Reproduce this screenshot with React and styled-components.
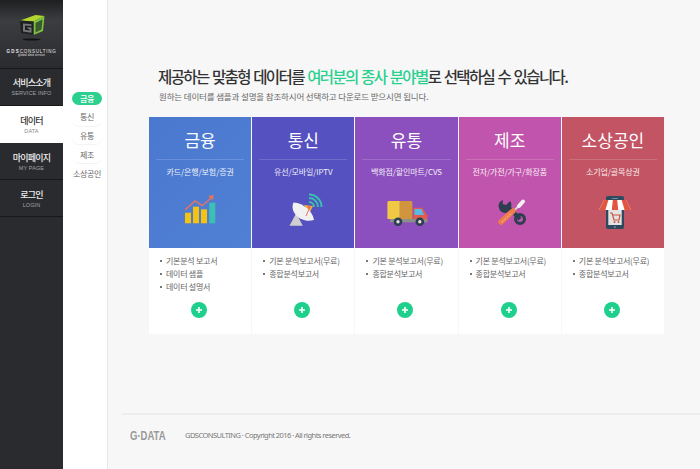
import React from "react";
import styled, { createGlobalStyle } from "styled-components";

const Global = createGlobalStyle`
  html, body { margin: 0; padding: 0; height: 100%; overflow: hidden; }
  body { font-family: "Noto Sans CJK KR", "Noto Sans", sans-serif; background: #f7f7f7; }
  * { box-sizing: border-box; }
  ul { list-style: none; margin: 0; padding: 0; }
`;

const Page = styled.div`
  display: flex;
  width: 700px;
  height: 469px;
`;

const Sidebar = styled.nav`
  width: 63px;
  flex: none;
  background: #2a2b2f;
`;

const LogoBox = styled.div`
  height: 69px;
  display: flex;
  flex-direction: column;
  align-items: center;
  padding-top: 14px;
  background: linear-gradient(#1e1f21, #3c3d40 30%, #2a2b2e 100%);
  border-bottom: 1px solid #17181a;
`;

const LogoText = styled.div`
  margin-top: 8px;
  font-family: "Liberation Sans", sans-serif;
  font-size: 4.5px;
  line-height: 5px;
  letter-spacing: 0.75px;
  color: #e8e8e8;
  white-space: nowrap;
  b { font-weight: 700; letter-spacing: 1.2px; }
`;

const LogoSub = styled.div`
  font-family: "Liberation Sans", sans-serif;
  font-size: 3px;
  line-height: 3px;
  color: #bbb;
  font-weight: 700;
  white-space: nowrap;
`;

const MenuItem = styled.a`
  display: flex;
  flex-direction: column;
  align-items: center;
  height: 37px;
  padding-top: 7px;
  background: ${(p) => (p.$active ? "#fff" : "#2a2b2f")};
  border-bottom: 1px solid ${(p) => (p.$active ? "#fff" : "#17181a")};
  color: ${(p) => (p.$active ? "#333" : "#eee")};
  &:first-of-type { padding-top: 6px; }
`;

const MenuTitle = styled.span`
  font-size: 9px;
  line-height: 15px;
  font-weight: 500;
  letter-spacing: -0.8px;
  white-space: nowrap;
`;

const MenuSub = styled.span`
  font-family: "Liberation Sans", sans-serif;
  font-size: 5.5px;
  line-height: 7px;
  letter-spacing: 0.1px;
  color: ${(p) => (p.$active ? "#888" : "#a0a1a4")};
  white-space: nowrap;
`;

const SubNav = styled.ul`
  width: 45px;
  flex: none;
  background: #fff;
  border-right: 1px solid #e6e6e6;
  padding: 92px 5px 0 9px;
`;

const SubItem = styled.li`
  height: ${(p) => (p.$active ? "13px" : "18.7px")};
  margin-bottom: ${(p) => (p.$active ? "3px" : "0")};
  display: flex;
  align-items: center;
  justify-content: center;
  font-size: 8px;
  letter-spacing: -0.3px;
  white-space: nowrap;
  border-radius: 7px;
  background: ${(p) => (p.$active ? "#2bd08f" : "transparent")};
  color: ${(p) => (p.$active ? "#fff" : "#666")};
  font-weight: ${(p) => (p.$active ? 500 : 400)};
  border-bottom: ${(p) => (p.$active || p.$last ? "0" : "1px solid #f3f3f3")};
`;

const Main = styled.main`
  flex: 1;
  display: flex;
  flex-direction: column;
  min-width: 0;
`;

const Content = styled.section`
  flex: 1;
  padding: 65px 36px 0 41px;
`;

const Title = styled.h1`
  margin: 0 0 0 9px;
  font-size: 15.5px;
  line-height: 22px;
  font-weight: 500;
  letter-spacing: -1.62px;
  word-spacing: 1.5px;
  color: #333;
  white-space: nowrap;
  em { font-style: normal; color: #2bd08f; }
`;

const Lead = styled.p`
  margin: 3px 0 0 10px;
  font-size: 8.5px;
  line-height: 13px;
  letter-spacing: -0.15px;
  color: #666;
  white-space: nowrap;
`;

const Cards = styled.div`
  display: grid;
  grid-template-columns: repeat(5, 1fr);
  gap: 1px;
  width: 515px;
  margin-top: 14px;
`;

const Card = styled.article`
  height: 217px;
  background: #fff;
  display: flex;
  flex-direction: column;
`;

const CardTop = styled.div`
  height: 131px;
  background: ${(p) => p.$bg};
  color: #fff;
  padding: 0 7px;
  display: flex;
  flex-direction: column;
  align-items: center;
`;

const CardName = styled.h2`
  margin: 0;
  width: 100%;
  height: 43px;
  padding-top: 11px;
  text-align: center;
  font-size: 17px;
  line-height: 24px;
  font-weight: 400;
  border-bottom: 1px solid rgba(255, 255, 255, 0.16);
  white-space: nowrap;
`;

const CardTags = styled.p`
  margin: 5px 0 0;
  font-size: 8px;
  line-height: 14px;
  letter-spacing: -0.1px;
  opacity: 0.9;
  white-space: nowrap;
`;

const IconBox = styled.div`
  width: 44px;
  height: 38px;
  margin-top: 13px;
`;

const CardBody = styled.div`
  flex: 1;
  padding: 6px 0 0 11px;
  display: flex;
  flex-direction: column;
`;

const Bullet = styled.li`
  position: relative;
  padding-left: 6px;
  font-size: 8px;
  line-height: 13px;
  letter-spacing: -0.25px;
  color: #666;
  white-space: nowrap;
  &::before {
    content: "";
    position: absolute;
    left: 0;
    top: 6px;
    width: 2px;
    height: 2px;
    background: #777;
  }
`;

const PlusRow = styled.div`
  margin: auto 0 16px -13px;
  display: flex;
  justify-content: center;
`;

const Plus = styled.button`
  width: 16px;
  height: 16px;
  padding: 0;
  border: 0;
  border-radius: 50%;
  background: #1fd08c;
  display: flex;
  align-items: center;
  justify-content: center;
`;

const Footer = styled.footer`
  margin-left: 14px;
  height: 56px;
  flex: none;
  border-top: 2px solid #ececec;
  display: flex;
  align-items: center;
  padding: 0 0 14px 8px;
`;

const FooterLogo = styled.span`
  width: 55px;
  font-family: "Liberation Sans", sans-serif;
  font-size: 13px;
  font-weight: 700;
  color: #999;
  white-space: nowrap;
  transform: scaleX(0.73);
  transform-origin: left center;
`;

const Copy = styled.span`
  font-family: "Noto Sans", sans-serif;
  font-size: 7.5px;
  letter-spacing: -0.54px;
  color: #777;
  white-space: nowrap;
`;

const CubeLogo = () => (
  <svg width="26" height="27" viewBox="0 0 26 27">
    <ellipse cx="12.5" cy="25.5" rx="9" ry="0.9" fill="#111" />
    <path d="M1 6.5 L16.5 1 L25.5 2 L14.5 7.5 Z" fill="#b5d62f" />
    <path d="M14.5 7.5 L25.5 2 L24 17 L14.5 21 Z" fill="#7fc241" />
    <path d="M16.5 9 L23.5 5.5 L22.5 15.5 L16.5 18.5 Z" fill="#3a5c2c" />
    <path d="M1 6.5 L14.5 7.5 L14.5 21 L2 19 Z" fill="#202122" />
    <path d="M4 9.5 L12.5 10.2 L12.5 12 L6 11.4 L6 16 L10.5 16.5 L10.5 15 L8.5 14.8 L8.5 13.2 L12.5 13.6 L12.5 18.8 L4 17.6 Z" fill="#77787a" />
  </svg>
);

const ChartIcon = () => (
  <svg width="44" height="38" viewBox="0 0 44 38">
    <rect x="7" y="20.7" width="6" height="10.6" fill="#f5c20f" />
    <rect x="15" y="14.7" width="6" height="16.6" fill="#f5c20f" />
    <rect x="23" y="17.3" width="6" height="14" fill="#f5c20f" />
    <rect x="31.3" y="10.7" width="6" height="20.6" fill="#3cc0b4" />
    <path d="M7 18 L17 9 L24.3 13.7 L33 6" fill="none" stroke="#e8735c" strokeWidth="1.4" />
    <path d="M30 4 L35.5 3 L35 8.5 Z" fill="#e8735c" />
  </svg>
);

const DishIcon = () => (
  <svg width="44" height="38" viewBox="0 0 44 38">
    <path d="M8.5 33.7 L15.2 21.3 L21.8 33.7 Z" fill="#cfcfcf" />
    <path d="M23 13 L32 14 L28 22 Z" fill="#e7b23a" />
    <path d="M12.5 10.5 C8 20 20 32 33 28 C32 20 23 11 12.5 10.5 Z" fill="#f1f1f3" />
    <path d="M25 24 L29 15" stroke="#e8735c" strokeWidth="1" />
    <circle cx="28" cy="15" r="1.6" fill="#e8735c" />
    <g fill="none" stroke="#36c2ae" strokeWidth="2">
      <path d="M28 10 A5 5 0 0 1 33 15" />
      <path d="M28 6 A9 9 0 0 1 37 15" />
      <path d="M28 2.5 A12.5 12.5 0 0 1 40.5 15" />
    </g>
  </svg>
);

const TruckIcon = () => (
  <svg width="44" height="38" viewBox="0 0 44 38">
    <path d="M5 9 H15.8 V27 H3.4 V10.5 A1.5 1.5 0 0 1 5 9 Z" fill="#f0c843" />
    <path d="M15.8 9 H27 A1.5 1.5 0 0 1 28.4 10.5 V27 H15.8 Z" fill="#d2943c" />
    <path d="M29.4 15.7 H38 L43.4 23 V30 H29.4 Z" fill="#e25b4c" />
    <path d="M30.5 17 H37.5 L40 23 H30.5 Z" fill="#5cb8e6" />
    <rect x="6" y="27" width="37.4" height="3.3" fill="#8a8f88" />
    <circle cx="14" cy="29.7" r="4.3" fill="#2c3e4f" />
    <circle cx="14" cy="29.7" r="1.7" fill="#ddd" />
    <circle cx="35.8" cy="29.7" r="4.3" fill="#2c3e4f" />
    <circle cx="35.8" cy="29.7" r="1.7" fill="#ddd" />
  </svg>
);

const ToolIcon = () => (
  <svg width="44" height="38" viewBox="0 0 44 38">
    <path d="M19 14 L32 27" stroke="#2c3e4f" strokeWidth="4" />
    <path d="M15 8 A6 6 0 0 0 11 16 A6 6 0 0 0 20 20 L23 15 A6 6 0 0 0 22 9 L18 13 L14.5 12 Z" fill="#2c3e4f" />
    <circle cx="32" cy="27" r="4.5" fill="none" stroke="#2c3e4f" strokeWidth="3" />
    <path d="M25 19.5 L33 12" stroke="#d8d8d8" strokeWidth="2" />
    <path d="M31 14 L35 9.5" stroke="#f2f2f2" strokeWidth="4" strokeLinecap="round" />
    <path d="M13 30 L25 19" stroke="#ef7d4c" strokeWidth="5.5" strokeLinecap="round" />
    <path d="M14 30 L23 21.5" stroke="#f7c9ae" strokeWidth="1" strokeDasharray="2 1.5" />
  </svg>
);

const ShopIcon = () => (
  <svg width="44" height="38" viewBox="0 0 44 38">
    <rect x="15" y="4" width="18" height="33" rx="2" fill="#2f4a5e" />
    <rect x="21" y="6" width="6" height="1" fill="#6f8798" />
    <rect x="17.3" y="16" width="13.4" height="17" fill="#e4e4e4" />
    <circle cx="24" cy="35" r="1" fill="#6f8798" />
    <path d="M13 8 H35 L40 18 H8 Z" fill="#fff" />
    <path d="M13 8 H17.4 L14.4 18 H8 Z M21.8 8 H26.2 L27.2 18 H20.8 Z M30.6 8 H35 L40 18 H33.6 Z" fill="#e2573f" />
    <path d="M19 21 H21 L23 28 H28 L29 23 H21.5" fill="none" stroke="#c9543c" strokeWidth="1.2" />
    <circle cx="23.5" cy="30" r="1" fill="#c9543c" />
    <circle cx="27.5" cy="30" r="1" fill="#c9543c" />
  </svg>
);

const menu = [
  ["서비스소개", "SERVICE INFO"],
  ["데이터", "DATA", true],
  ["마이페이지", "MY PAGE"],
  ["로그인", "LOGIN"],
];

const subs = ["금융", "통신", "유통", "제조", "소상공인"];

const free = ["기본 분석보고서(무료)", "종합분석보고서"];

const cards = [
  { name: "금융", tags: "카드/은행/보험/증권", bg: "linear-gradient(135deg, #4a78cf, #5080d4)", Icon: ChartIcon, items: ["기본분석 보고서", "데이터 샘플", "데이터 설명서"] },
  { name: "통신", tags: "유선/모바일/IPTV", bg: "#5551c0", Icon: DishIcon, items: free },
  { name: "유통", tags: "백화점/할인마트/CVS", bg: "#8b50bd", Icon: TruckIcon, items: free },
  { name: "제조", tags: "전자/가전/가구/화장품", bg: "#c154ac", Icon: ToolIcon, items: free },
  { name: "소상공인", tags: "소기업/골목상권", bg: "#c25464", Icon: ShopIcon, items: free },
];

export default function App() {
  return (
    <Page>
      <Global />
      <Sidebar>
        <LogoBox>
          <CubeLogo />
          <LogoText><b>GDS</b>CONSULTING</LogoText>
          <LogoSub>global data service</LogoSub>
        </LogoBox>
        {menu.map(([title, sub, active]) => (
          <MenuItem key={sub} $active={active}>
            <MenuTitle>{title}</MenuTitle>
            <MenuSub $active={active}>{sub}</MenuSub>
          </MenuItem>
        ))}
      </Sidebar>
      <SubNav>
        {subs.map((s, i) => (
          <SubItem key={s} $active={i === 0} $last={i === subs.length - 1}>{s}</SubItem>
        ))}
      </SubNav>
      <Main>
        <Content>
          <Title>제공하는 맞춤형 데이터를 <em>여러분의 종사 분야별</em>로 선택하실 수 있습니다.</Title>
          <Lead>원하는 데이터를 샘플과 설명을 참조하시어 선택하고 다운로드 받으시면 됩니다.</Lead>
          <Cards>
            {cards.map(({ name, tags, bg, Icon, items }) => (
              <Card key={name}>
                <CardTop $bg={bg}>
                  <CardName>{name}</CardName>
                  <CardTags>{tags}</CardTags>
                  <IconBox><Icon /></IconBox>
                </CardTop>
                <CardBody>
                  <ul>
                    {items.map((t) => <Bullet key={t}>{t}</Bullet>)}
                  </ul>
                  <PlusRow>
                    <Plus aria-label="more">
                      <svg width="8" height="8" viewBox="0 0 8 8">
                        <path d="M4 1 V7 M1 4 H7" stroke="#fff" strokeWidth="1.6" />
                      </svg>
                    </Plus>
                  </PlusRow>
                </CardBody>
              </Card>
            ))}
          </Cards>
        </Content>
        <Footer>
          <FooterLogo>G·DATA</FooterLogo>
          <Copy>GDSCONSULTING · Copyright 2016 · All rights reserved.</Copy>
        </Footer>
      </Main>
    </Page>
  );
}
